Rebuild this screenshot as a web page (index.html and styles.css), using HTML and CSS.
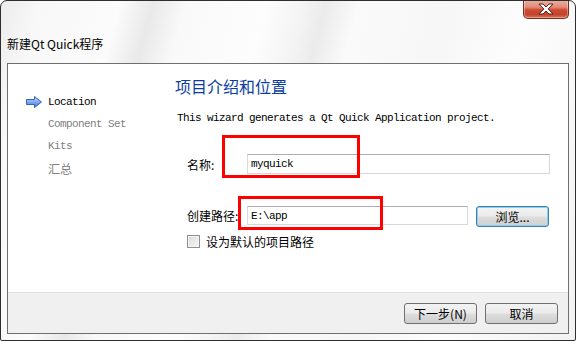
FILE: index.html
```html
<!DOCTYPE html>
<html lang="zh-CN">
  <head>
    <meta charset="UTF-8">
    <title>新建Qt Quick程序</title>
    <link rel="stylesheet" href="styles.css">
  </head>
  <body>
    <div class="window">
      <header class="titlebar">
        <div class="caption-row">
          <button type="button" class="close" aria-label="关闭">
            <svg width="18" height="12" viewBox="0 0 18 12">
              <path d="M2 1 H6 L9 4 L12 1 H16 L11.2 6 L16 11 H12 L9 8 L6 11 H2 L6.8 6 Z" fill="#fff" stroke="#5a1e14" stroke-width="1" stroke-linejoin="round"/>
            </svg>
          </button>
        </div>
        <div class="title">新建Qt Quick程序</div>
      </header>

      <div class="client">
        <div class="page">
          <ul class="steps">
            <li class="step current">
              <span class="step-icon">
                <svg width="16" height="12" viewBox="0 0 16 12">
                  <defs>
                    <linearGradient id="arrowFill" x1="0" y1="0" x2="0" y2="1">
                      <stop offset="0" stop-color="#c4dcfa"/>
                      <stop offset="0.5" stop-color="#7eaaf0"/>
                      <stop offset="1" stop-color="#3d74d6"/>
                    </linearGradient>
                  </defs>
                  <path d="M0.5 3.5 H8.5 V0.5 L15.5 6 L8.5 11.5 V8.5 H0.5 Z" fill="url(#arrowFill)" stroke="#3563b8" stroke-width="1" stroke-linejoin="round"/>
                </svg>
              </span>
              Location
            </li>
            <li class="step"><span class="step-icon"></span>Component Set</li>
            <li class="step"><span class="step-icon"></span>Kits</li>
            <li class="step cjk"><span class="step-icon"></span>汇总</li>
          </ul>

          <section class="main">
            <h1>项目介绍和位置</h1>
            <p class="intro">This wizard generates a Qt Quick Application project.</p>

            <div class="form">
              <div class="row row-name">
                <label for="name">名称:</label>
                <input type="text" id="name" class="field field-wide" value="myquick">
              </div>
              <div class="row row-path">
                <label for="path">创建路径:</label>
                <input type="text" id="path" class="field field-path" value="E:\app">
                <button type="button" class="btn btn-focus">浏览...</button>
              </div>
              <div class="row row-check">
                <span class="checkbox"></span>
                <span class="check-label">设为默认的项目路径</span>
              </div>
            </div>

            <span class="mark mark-name"></span>
            <span class="mark mark-path"></span>
          </section>
        </div>

        <footer class="buttons">
          <button type="button" class="btn">下一步(N)</button>
          <button type="button" class="btn">取消</button>
        </footer>
      </div>
    </div>
  </body>
</html>
```

FILE: styles.css
```css
* {
  box-sizing: border-box;
}

body {
  margin: 0;
  background: #ffffff;
  font-family: "Noto Sans CJK SC", "Noto Sans", sans-serif;
  font-size: 12px;
  color: #000;
}

.window {
  width: 576px;
  height: 341px;
  border: 1px solid #2e2e2e;
  border-radius: 7px 7px 2px 2px;
  display: flex;
  flex-direction: column;
  overflow: hidden;
  background: linear-gradient(105deg, #ececec 0%, #f8f8f8 6%, #fbfbfb 18%, #e9e9e9 23%, #f9f9f9 28%, #fdfdfd 40%, #f3f3f3 46%, #ebebeb 49%, #fafafa 54%, #f7f7f7 68%, #fdfdfd 80%, #f2f2f2 100%);
}

/* title bar */
.titlebar {
  height: 62px;
  flex: none;
}

.caption-row {
  display: flex;
  justify-content: flex-end;
  padding-right: 6px;
}

.close {
  width: 46px;
  height: 19px;
  margin-top: -1px;
  padding: 0;
  display: flex;
  align-items: center;
  justify-content: center;
  border: 1px solid #7b2a1d;
  border-top: none;
  border-radius: 0 0 5px 5px;
  background: linear-gradient(#eab2a4 0%, #e28a76 40%, #cc4b31 55%, #c3432c 80%, #d8755c 100%);
  box-shadow: inset 0 0 0 1px rgba(255, 255, 255, 0.35);
}

.title {
  margin-top: 17px;
  padding-left: 6px;
  line-height: 16px;
  font-size: 12px;
  color: #000;
}

/* client area */
.client {
  flex: 1;
  margin: 0 6px 6px;
  border: 1px solid #6f6f6f;
  display: flex;
  flex-direction: column;
  background: #f0f0f0;
}

.page {
  height: 229px;
  flex: none;
  background: #fff;
  border-bottom: 1px solid #dfdfdf;
  display: grid;
  grid-template-columns: 167px 1fr;
}

.steps {
  list-style: none;
  margin: 0;
  padding: 27px 0 0 18px;
}

.step {
  display: flex;
  align-items: center;
  gap: 6px;
  height: 22px;
  font-family: "Liberation Mono", monospace;
  font-size: 11px;
  letter-spacing: -0.6px;
  color: #808080;
}

.step.current {
  color: #000;
}

.step.cjk {
  font-family: "Noto Sans CJK SC", sans-serif;
  font-size: 12px;
  letter-spacing: 0;
}

.step-icon {
  width: 16px;
  height: 12px;
  display: flex;
}

.main {
  position: relative;
  padding: 12px 18px 0 0;
}

.main h1 {
  margin: 0;
  font-size: 16px;
  line-height: 20px;
  font-weight: normal;
  color: #0b3d9e;
}

.intro {
  margin: 12px 0 0 2px;
  line-height: 20px;
  font-family: "Liberation Mono", monospace;
  font-size: 11px;
  letter-spacing: -0.6px;
}

.form {
  margin-top: 26px;
  padding-left: 12px;
}

.row {
  display: flex;
  align-items: center;
}

.row label {
  width: 60px;
  flex: none;
}

.row-path {
  margin-top: 32px;
  align-items: flex-start;
}

.row-path label {
  line-height: 20px;
}

.row-check {
  margin-top: 8px;
  gap: 6px;
}

.field {
  height: 20px;
  padding: 0 3px;
  border: 1px solid #d5d9df;
  border-top-color: #abadb3;
  background: #fff;
  font-family: "Liberation Mono", monospace;
  font-size: 11px;
  letter-spacing: -0.6px;
  color: #000;
  outline: none;
}

.field-wide {
  width: 303px;
}

.field-path {
  width: 221px;
  height: 19px;
  margin-right: 8px;
}

.btn {
  width: 73px;
  height: 21px;
  padding: 0;
  border: 1px solid #707070;
  border-radius: 3px;
  background: linear-gradient(#f3f3f3 0%, #ebebeb 48%, #dddddd 52%, #cfcfcf 100%);
  font-family: "Noto Sans CJK SC", sans-serif;
  font-size: 12px;
  color: #000;
}

.btn-focus {
  border-color: #3c7fb1;
  box-shadow: inset 0 0 0 1px #8ed0f0;
}

.checkbox {
  width: 13px;
  height: 13px;
  border: 1px solid #8e8f8f;
  background: linear-gradient(135deg, #dcdcdc, #f6f6f6);
  box-shadow: inset 0 0 0 1px #f4f4f4;
}

.check-label {
  line-height: 13px;
}

/* red annotation boxes drawn over the form */
.mark {
  position: absolute;
  border: 3px solid #ff0000;
}

.mark-name {
  left: 47px;
  top: 71px;
  width: 138px;
  height: 43px;
}

.mark-path {
  left: 63px;
  top: 132px;
  width: 145px;
  height: 34px;
}

.buttons {
  display: flex;
  justify-content: flex-end;
  gap: 8px;
  padding: 10px 10px 0 0;
}
```
